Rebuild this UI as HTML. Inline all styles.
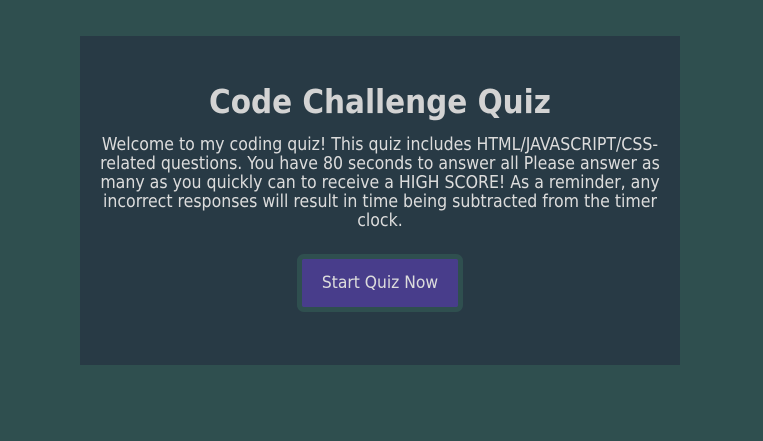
<!DOCTYPE html>
<html><head><style>
html,body{margin:0;padding:0;width:763px;height:441px;background:#2f4f4f;overflow:hidden}
.card{position:absolute;left:80px;top:36px;width:600px;height:329px;background:#283a45;color:#dcdcdc;text-align:center;font-family:"DejaVu Sans Condensed","DejaVu Sans",sans-serif;font-stretch:condensed}
h1{position:absolute;left:0;right:0;top:48px;margin:0;font-size:32.8px;line-height:36px;font-weight:bold;color:#d3d3d3}
p{position:absolute;left:0;right:0;top:100px;margin:0;font-size:17.55px;line-height:19px;white-space:nowrap}
.btn{position:absolute;left:217px;top:218px;width:156px;height:48px;background:#483d8b;border:5px solid #2f4f4f;border-radius:7px;color:#dcdcdc;font-size:17.3px;line-height:48px}
</style></head><body>
<div class="card">
<h1>Code Challenge Quiz</h1>
<p>Welcome to my coding quiz! This quiz includes HTML/JAVASCRIPT/CSS-<br>related questions. You have 80 seconds to answer all Please answer as<br>many as you quickly can to receive a HIGH SCORE! As a reminder, any<br>incorrect responses will result in time being subtracted from the timer<br>clock.</p>
<div class="btn">Start Quiz Now</div>
</div>
</body></html>
